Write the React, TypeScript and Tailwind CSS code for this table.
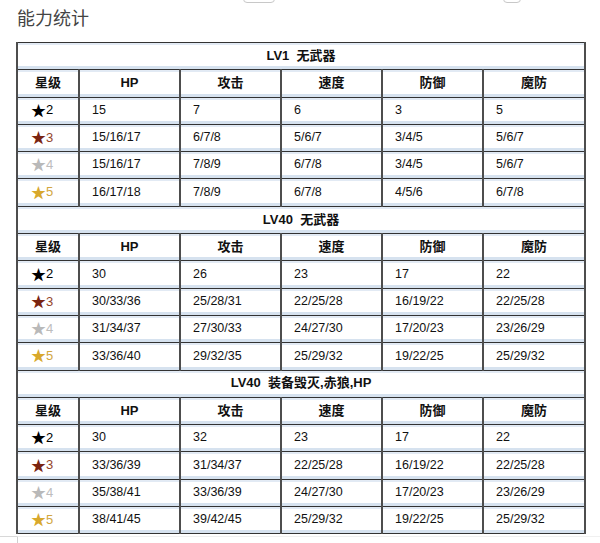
import { Fragment } from "react";

const FONT = '"Liberation Sans", Arial, "Noto Sans CJK SC", sans-serif';

type Row = [number, string, string, string, string, string];

const SECTIONS: { title: string; rows: Row[] }[] = [
  {
    title: "LV1 无武器",
    rows: [
      [2, "15", "7", "6", "3", "5"],
      [3, "15/16/17", "6/7/8", "5/6/7", "3/4/5", "5/6/7"],
      [4, "15/16/17", "7/8/9", "6/7/8", "3/4/5", "5/6/7"],
      [5, "16/17/18", "7/8/9", "6/7/8", "4/5/6", "6/7/8"],
    ],
  },
  {
    title: "LV40 无武器",
    rows: [
      [2, "30", "26", "23", "17", "22"],
      [3, "30/33/36", "25/28/31", "22/25/28", "16/19/22", "22/25/28"],
      [4, "31/34/37", "27/30/33", "24/27/30", "17/20/23", "23/26/29"],
      [5, "33/36/40", "29/32/35", "25/29/32", "19/22/25", "25/29/32"],
    ],
  },
  {
    title: "LV40 装备毁灭,赤狼,HP",
    rows: [
      [2, "30", "32", "23", "17", "22"],
      [3, "33/36/39", "31/34/37", "22/25/28", "16/19/22", "22/25/28"],
      [4, "35/38/41", "33/36/39", "24/27/30", "17/20/23", "23/26/29"],
      [5, "38/41/45", "39/42/45", "25/29/32", "19/22/25", "25/29/32"],
    ],
  },
];

const HEADERS = ["星级", "HP", "攻击", "速度", "防御", "魔防"];

const STAR_COLORS: Record<number, [string, string]> = {
  2: ["text-black", "text-black"],
  3: ["text-[#7a2410]", "text-[#94442a]"],
  4: ["text-[#b9b9b9]", "text-[#bdbdbd]"],
  5: ["text-[#d8a82c]", "text-[#d2a640]"],
};

function Star({ n }: { n: number }) {
  const [star, digit] = STAR_COLORS[n];
  return (
    <span className="flex items-center">
      <span className={`${star} text-[15px] leading-none`}>★</span>
      <span className={`${digit} text-[13px]`}>{n}</span>
    </span>
  );
}

function Cell({
  children,
  bold,
  center,
  span,
}: {
  children: React.ReactNode;
  bold?: boolean;
  center?: boolean;
  span?: number;
}) {
  return (
    <td
      colSpan={span}
      className="p-0 border-y border-y-[#333] border-x-2 border-x-[#4d4d4d] align-middle"
    >
      <div
        className={`h-[26.3px] flex items-center border-t-2 border-t-[#e2eaf4] border-b-[3px] border-b-[#d6e2ef] ${
          center ? "justify-center" : "pl-[12px]"
        } ${bold ? "font-bold text-[13px]" : ""}`}
      >
        {children}
      </div>
    </td>
  );
}

export default function App() {
  return (
    <div
      className="relative w-[600px] h-[543px] overflow-hidden bg-white"
      style={{ fontFamily: FONT }}
    >
      <div className="absolute left-[243px] top-[-8px] w-[32px] h-[11px] rounded-[4px] border border-[#c8c8c8]" />
      <div className="absolute left-[503px] top-[-8px] w-[18px] h-[11px] rounded-[4px] border border-[#c8c8c8]" />

      <div
        className="pl-[17px] pt-[5px] text-[18px] leading-[24px] text-[#444]"
        style={{ fontFamily: '"Noto Sans CJK SC", sans-serif' }}
      >
        能力统计
      </div>

      <table className="ml-[16px] mt-[13px] border-collapse table-fixed w-[569px] text-[12.5px] text-[#111]">
        <colgroup>
          <col className="w-[62px]" />
          <col className="w-[101px]" />
          <col className="w-[101px]" />
          <col className="w-[101px]" />
          <col className="w-[101px]" />
          <col className="w-[102px]" />
        </colgroup>
        <tbody>
          {SECTIONS.map((s) => (
            <Fragment key={s.title}>
              <tr>
                <Cell span={6} bold center>
                  <span className="whitespace-pre">{s.title.replace(" ", "  ")}</span>
                </Cell>
              </tr>
              <tr>
                {HEADERS.map((h) => (
                  <Cell key={h} bold center>
                    {h}
                  </Cell>
                ))}
              </tr>
              {s.rows.map((r) => (
                <tr key={r[0]}>
                  <td className="p-0 border-y border-y-[#333] border-x-2 border-x-[#4d4d4d]">
                    <div className="h-[26.3px] flex items-center pl-[13px] border-t-2 border-t-[#e2eaf4] border-b-[3px] border-b-[#d6e2ef]">
                      <Star n={r[0]} />
                    </div>
                  </td>
                  {r.slice(1).map((v, i) => (
                    <Cell key={i}>{v}</Cell>
                  ))}
                </tr>
              ))}
            </Fragment>
          ))}
        </tbody>
      </table>

      <div className="flex mt-[2px] h-[20px]">
        <div className="w-[17px] border-t border-[#d8d8d8]" />
        <div className="flex-1 border-l border-t border-l-[#d0d0d0] border-t-[#f0f0f0]" />
      </div>
    </div>
  );
}
